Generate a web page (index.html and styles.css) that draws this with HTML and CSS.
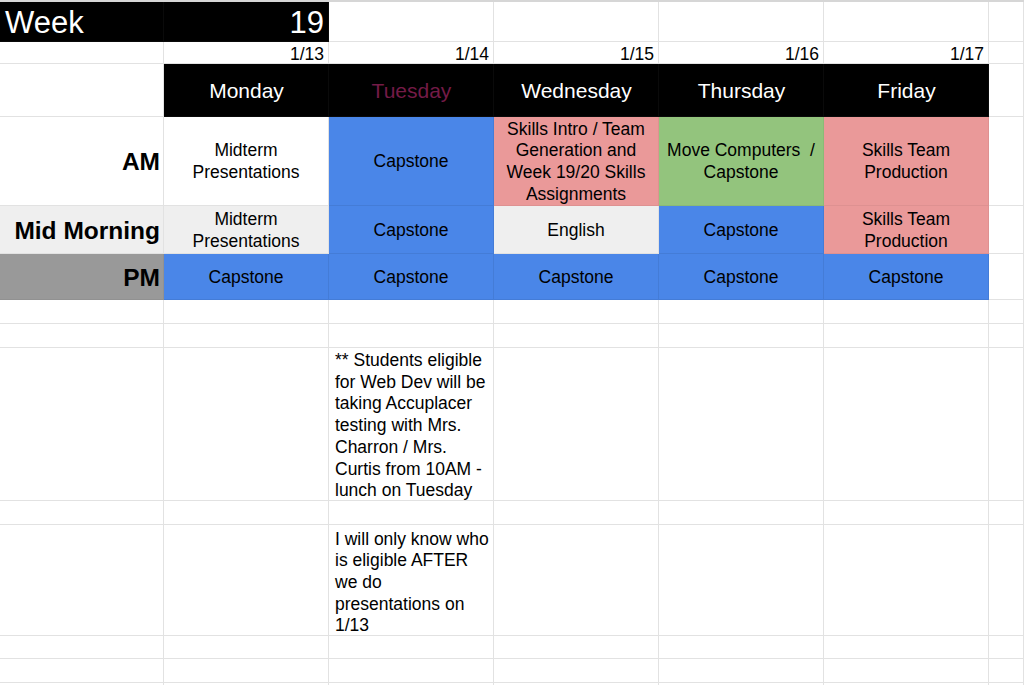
FILE: index.html
```html
<!DOCTYPE html>
<html>
<head>
<meta charset="utf-8">
<link rel="stylesheet" href="styles.css">
</head>
<body>
<div class="sheet">
  <!-- row 1 -->
  <div class="c blk week">Week</div>
  <div class="c blk week right">19</div>
  <div class="c"></div><div class="c"></div><div class="c"></div><div class="c"></div><div class="c"></div>
  <!-- row 2 -->
  <div class="c"></div>
  <div class="c right date">1/13</div>
  <div class="c right date">1/14</div>
  <div class="c right date">1/15</div>
  <div class="c right date">1/16</div>
  <div class="c right date">1/17</div>
  <div class="c"></div>
  <!-- row 3 -->
  <div class="c"></div>
  <div class="c blk day">Monday</div>
  <div class="c blk day tue">Tuesday</div>
  <div class="c blk day">Wednesday</div>
  <div class="c blk day">Thursday</div>
  <div class="c blk day">Friday</div>
  <div class="c"></div>
  <!-- row 4 -->
  <div class="c label">AM</div>
  <div class="c mid">Midterm Presentations</div>
  <div class="c mid blue">Capstone</div>
  <div class="c mid pink">Skills Intro / Team Generation and Week 19/20 Skills Assignments</div>
  <div class="c mid green">Move Computers &nbsp;/ Capstone</div>
  <div class="c mid pink">Skills Team Production</div>
  <div class="c"></div>
  <!-- row 5 -->
  <div class="c label light">Mid Morning</div>
  <div class="c mid light">Midterm Presentations</div>
  <div class="c mid blue">Capstone</div>
  <div class="c mid light">English</div>
  <div class="c mid blue">Capstone</div>
  <div class="c mid pink">Skills Team Production</div>
  <div class="c"></div>
  <!-- row 6 -->
  <div class="c label gray">PM</div>
  <div class="c mid blue">Capstone</div>
  <div class="c mid blue">Capstone</div>
  <div class="c mid blue">Capstone</div>
  <div class="c mid blue">Capstone</div>
  <div class="c mid blue">Capstone</div>
  <div class="c"></div>
  <!-- row 7 -->
  <div class="c"></div><div class="c"></div><div class="c"></div><div class="c"></div><div class="c"></div><div class="c"></div><div class="c"></div>
  <!-- row 8 -->
  <div class="c"></div><div class="c"></div><div class="c"></div><div class="c"></div><div class="c"></div><div class="c"></div><div class="c"></div>
  <!-- row 9 -->
  <div class="c"></div><div class="c"></div>
  <div class="c note">** Students eligible for Web Dev will be taking Accuplacer testing with Mrs. Charron / Mrs. Curtis from 10AM - lunch on Tuesday</div>
  <div class="c"></div><div class="c"></div><div class="c"></div><div class="c"></div>
  <!-- row 10 -->
  <div class="c"></div><div class="c"></div><div class="c"></div><div class="c"></div><div class="c"></div><div class="c"></div><div class="c"></div>
  <!-- row 11 -->
  <div class="c"></div><div class="c"></div>
  <div class="c note note-low">I will only know who is eligible AFTER we do presentations on 1/13</div>
  <div class="c"></div><div class="c"></div><div class="c"></div><div class="c"></div>
  <!-- row 12 -->
  <div class="c"></div><div class="c"></div><div class="c"></div><div class="c"></div><div class="c"></div><div class="c"></div><div class="c"></div>
  <!-- row 13 -->
  <div class="c"></div><div class="c"></div><div class="c"></div><div class="c"></div><div class="c"></div><div class="c"></div><div class="c"></div>
  <!-- row 14 -->
  <div class="c"></div><div class="c"></div><div class="c"></div><div class="c"></div><div class="c"></div><div class="c"></div><div class="c"></div>
</div>
</body>
</html>
```

FILE: styles.css
```css
html, body {
  margin: 0;
  padding: 0;
  background: #ffffff;
  overflow: hidden;
}

body {
  font-family: "Liberation Sans", Arial, sans-serif;
  font-size: 17.5px;
  line-height: 21.7px;
  color: #000000;
}

.sheet {
  display: grid;
  grid-template-columns: 164px 165px 165px 165px 165px 165px 35px;
  grid-template-rows: 40px 22px 53px 89px 48px 46px 24px 24px 153px 24px 111px 23px 24px 24px;
  border-top: 2px solid #d6d6d6;
}

.c {
  box-sizing: border-box;
  border-right: 1px solid #e2e2e2;
  border-bottom: 1px solid #e2e2e2;
  display: flex;
  align-items: flex-end;
  justify-content: flex-start;
  padding: 0 4px 0 5px;
  overflow: hidden;
  white-space: normal;
}

.right {
  justify-content: flex-end;
  text-align: right;
}

.blk {
  background: #000000;
  color: #ffffff;
  border-color: #0a0a0a;
}

.week {
  font-size: 31px;
  line-height: 36px;
  padding-bottom: 0;
}

.date {
  padding-bottom: 0;
  line-height: 18px;
}

.day {
  font-size: 21px;
  line-height: 24px;
  align-items: center;
  justify-content: center;
  text-align: center;
  padding-top: 2px;
}

.tue {
  color: #741b47;
}

.label {
  font-weight: bold;
  font-size: 24.5px;
  line-height: 28px;
  justify-content: flex-end;
  align-items: center;
  text-align: right;
  padding: 2px 3px 0 4px;
}

.mid {
  align-items: center;
  justify-content: center;
  text-align: center;
  padding: 2px 3px 0;
}

.blue {
  background: #4a86e8;
  border-color: rgba(0, 0, 0, 0.07);
}

.pink {
  background: #ea9999;
  border-color: rgba(0, 0, 0, 0.05);
}

.green {
  background: #93c47d;
  border-color: rgba(0, 0, 0, 0.05);
}

.light {
  background: #efefef;
}

.gray {
  background: #999999;
  border-color: rgba(0, 0, 0, 0.05);
}

.note {
  align-items: flex-start;
  padding: 2px 3px 0 6px;
}

.note-low {
  padding-top: 3.5px;
}
```
